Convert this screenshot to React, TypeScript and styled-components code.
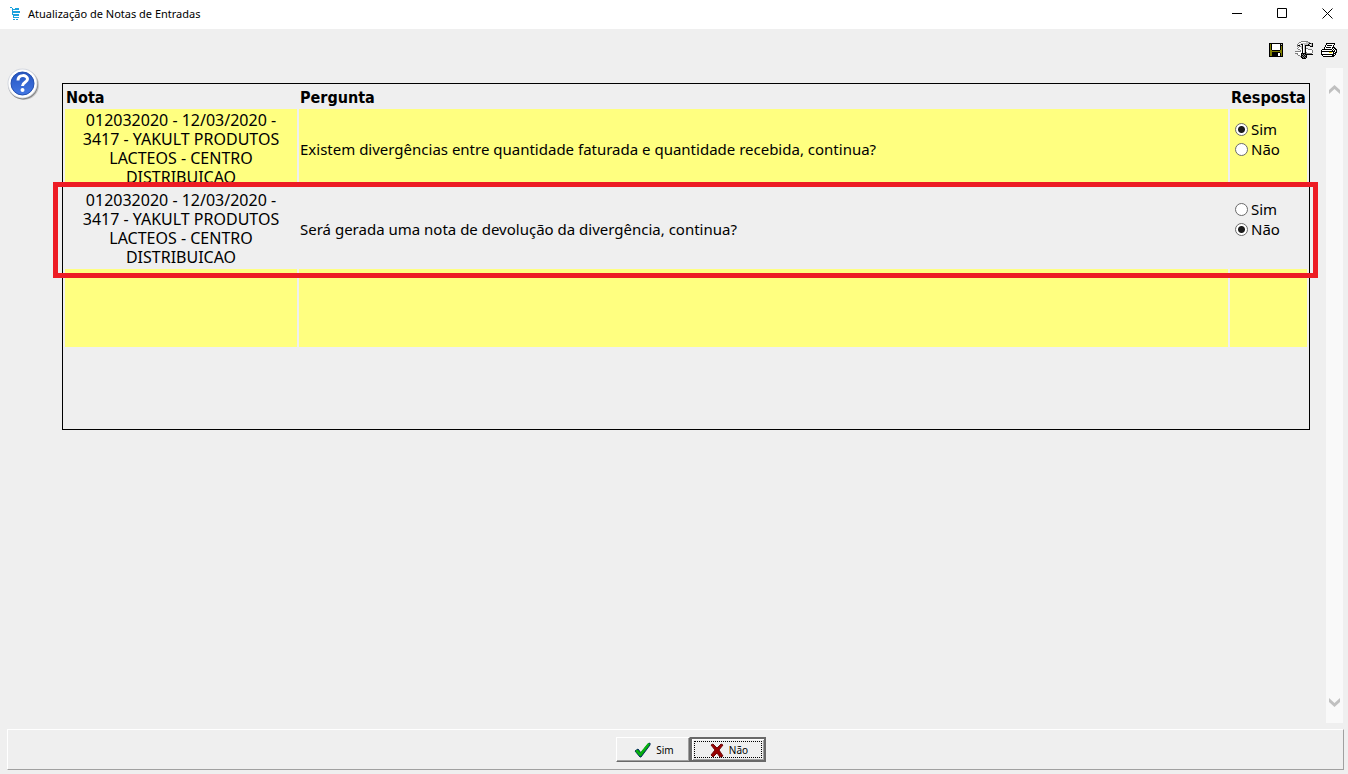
import React from "react";
import styled, { createGlobalStyle } from "styled-components";

const GlobalStyle = createGlobalStyle`
  *, *::before, *::after { box-sizing: border-box; }
  body {
    margin: 0;
    background: #efefef;
    color: #000;
    font-family: Tahoma, "Noto Sans", sans-serif;
    font-size: 15px;
    line-height: 19px;
  }
`;

const Window = styled.div`
  display: flex;
  flex-direction: column;
  min-height: 100vh;
`;

const TitleBar = styled.header`
  display: flex;
  align-items: center;
  gap: 8px;
  height: 29px;
  padding: 0 5px 2px 10px;
  background: #fff;
`;

const Title = styled.h1`
  flex: 1;
  margin: 0;
  font: 400 11px/16px "Segoe UI", "Noto Sans", sans-serif;
`;

const WindowControls = styled.div`
  display: flex;
  gap: 14px;
`;

const IconButton = styled.button<{ $width: number }>`
  display: flex;
  align-items: center;
  justify-content: center;
  width: ${(p) => p.$width}px;
  height: 24px;
  padding: 0;
  border: 0;
  background: transparent;
`;

const Toolbar = styled.nav`
  display: flex;
  justify-content: flex-end;
  align-items: center;
  gap: 8px;
  height: 39px;
  padding: 3px 11px 0 0;
`;

const Body = styled.div`
  display: flex;
  flex: 1;
`;

const HelpColumn = styled.aside`
  width: 62px;
  padding-left: 7px;
`;

const Content = styled.main`
  flex: 1;
  padding: 15px 16px 0 0;
`;

const Frame = styled.section`
  min-height: 347px;
  padding: 0 0 80px;
  border: 1px solid #000;
`;

const Table = styled.table`
  width: 100%;
  border-collapse: separate;
  border-spacing: 2px;
  table-layout: fixed;
`;

const Col = styled.col<{ $width?: number }>`
  width: ${(p) => (p.$width ? `${p.$width}px` : "auto")};
`;

const HeadCell = styled.th`
  height: 21px;
  padding: 2px 1px 0;
  font-family: Tahoma, "DejaVu Sans Condensed", sans-serif;
  font-size: 16px;
  text-align: left;
  white-space: nowrap;
`;

const Row = styled.tr<{ $striped?: boolean; $marked?: boolean }>`
  position: relative;
  z-index: ${(p) => (p.$marked ? 1 : 0)};

  td {
    background: ${(p) => (p.$striped ? "#ffff80" : "transparent")};
  }

  ${(p) =>
    p.$marked &&
    `td:first-child::after {
      content: "";
      position: absolute;
      inset: -7px -11px -11px -12px;
      border: 5px solid #ed1c24;
      pointer-events: none;
    }`}
`;

const Cell = styled.td<{ $align?: string }>`
  height: 78px;
  padding: 2px 1px 0;
  text-align: ${(p) => p.$align ?? "left"};
  vertical-align: middle;
`;

const NoteText = styled.div`
  padding: 0 14px;
  font-size: 16px;
`;

const Choices = styled.fieldset`
  display: flex;
  flex-direction: column;
  height: 76px;
  margin: 0;
  padding: 8px 0 0 4px;
  border: 0;
`;

const Choice = styled.label`
  display: flex;
  align-items: center;
  gap: 3px;
  height: 20px;
`;

const Radio = styled.input`
  appearance: none;
  width: 13px;
  height: 13px;
  margin: 0;
  border: 1px solid #6a6a6a;
  border-radius: 50%;
  background: #fff;

  &:checked {
    background: radial-gradient(circle, #1c1c1c 3px, #fff 4px);
  }
`;

const ScrollTrack = styled.div`
  display: flex;
  flex-direction: column;
  justify-content: space-between;
  width: 17px;
  margin-right: 5px;
  padding: 9px 0;
  background: #f9f9f9;
`;

const Footer = styled.footer`
  display: flex;
  justify-content: center;
  align-items: flex-start;
  height: 41px;
  margin: 6px 4px 4px 7px;
  padding: 7px 0 0 31px;
  border: 1px solid;
  border-color: #fff #a0a0a0 #a0a0a0 #fff;
`;

const ActionButton = styled.button<{ $focused?: boolean }>`
  display: flex;
  align-items: center;
  justify-content: center;
  gap: 5px;
  width: ${(p) => (p.$focused ? 76 : 74)}px;
  height: 25px;
  padding: 1px 0 0 2px;
  border: ${(p) => (p.$focused ? "2px solid #696969" : "1px solid")};
  ${(p) => !p.$focused && "border-color: #fff #696969 #696969 #fff;"}
  box-shadow: ${(p) =>
    p.$focused
      ? "inset 1px 1px #fff, inset -1px -1px #a0a0a0"
      : "inset -1px -1px #a0a0a0"};
  outline: ${(p) => (p.$focused ? "1px dotted #000" : "none")};
  outline-offset: -5px;
  background: #efefef;
  color: #000;
  font: 400 10px/13px Tahoma, "Noto Sans", sans-serif;
`;

/* Small bitmap icons, one character per pixel. */
const palette: Record<string, string> = {
  k: "#000",
  w: "#fff",
  g: "#808080",
  s: "#c0c0c0",
  o: "#808000",
  y: "#e8e000",
  b: "#1ba1dc",
};

const PixelIcon = ({ rows }: { rows: string[] }) => {
  const width = Math.max(...rows.map((r) => r.length));
  return (
    <svg
      width={width}
      height={rows.length}
      viewBox={`0 0 ${width} ${rows.length}`}
      shapeRendering="crispEdges"
      aria-hidden="true"
    >
      {rows.flatMap((row, y) =>
        [...row].map((c, x) =>
          palette[c] ? (
            <rect key={`${x}-${y}`} x={x} y={y} width="1" height="1" fill={palette[c]} />
          ) : null
        )
      )}
    </svg>
  );
};

const floppy = [
  "kkkkkkkkkkkkkk",
  "kokwwwwwwwwksk",
  "kokwwwwwwwwkkk",
  "kokwwwwwwwwkok",
  "kokwwwwwwwwkok",
  "kokwwwwwwwwkok",
  "kokwwwwwwwwkok",
  "kookkkkkkkkook",
  "kooooooooooook",
  "kookkkkkkkkook",
  "kookkkkkkwwkok",
  "kookkkkkkwwkok",
  "kookkkkkkwwkok",
  "kkkkkkkkkkkkkk",
];

const hammer = [
  "......ggggggg.....",
  "....ggwwwwwssgg...",
  "...gwwsssssssskkgk",
  "..gwsskkwsssskswsk",
  "..gkk..kwskkkkkssk",
  "..g.ggskwsk....kkk",
  "...gwwskwsk.......",
  "..gwwwskwskgg.....",
  "...ggwwkwskwwgggg.",
  ".....gwkwskwwwwwwg",
  "ggggggwkwskwwwwwwg",
  ".wwwwwwkwskgwwwwwg",
  "gggwwwkkkkkgggggg.",
  "..gwwwkgkgkkkkkkkk",
  "...ggwkkgkgk......",
  ".....gkgkgkk......",
  "......kkgkgk......",
  ".......kkkk.......",
];

const printer = [
  ".....kkkkkkkkk..",
  ".....kwwwwwwwk..",
  "....kwkkkkkwk...",
  "....kwwwwwwwk...",
  "...kwkkkkkwkkk..",
  "...kwwwwwwwkwkk.",
  ".kkkkkkkkkkwkwkk",
  "kwwwwwwwwwwkwkwk",
  "kkkkkkkkkkkkkkwk",
  "kwwwwwwwyyywkwkk",
  "kwwwwwwwwwwwkkk.",
  "kkkkkkkkkkkkkwk.",
  ".kwwwwwwwwwkkk..",
  "..kkkkkkkkkkk...",
];

const cart = [
  "bb........",
  "..b..bbbb.",
  "..bbbbbbb.",
  "..b.......",
  "..bbbbbbbb",
  "..bbbbbbbb",
  "..b.......",
  "..bbbbbbb.",
  "...bbbbbb.",
  "...b......",
  "...bbbbbb.",
  "..........",
  "...bb.bb..",
];

const CheckIcon = () => (
  <svg width="17" height="16" viewBox="0 0 17 16" aria-hidden="true">
    <path d="M1 9l3-2 3 4 7-9 2-1v2L7 15H6z" fill="#00a808" stroke="#002860" strokeWidth="1" />
    <path d="M2 8.500l4 4 9-11" fill="none" stroke="#08b010" strokeWidth="2" />
  </svg>
);

const CrossIcon = () => (
  <svg width="14" height="15" viewBox="0 0 14 15" aria-hidden="true">
    <path d="M1 2l2-1 4 4 4-4 2 1-4 5 4 6-3 1-3-4-4 4-2-2 4-5z" fill="#980000" stroke="#700808" strokeWidth="1" />
  </svg>
);

const HelpIcon = () => (
  <svg width="33" height="33" viewBox="0 0 33 33" role="img" aria-label="Ajuda">
    <defs>
      <linearGradient id="helpBlue" x1="0" y1="0" x2="0" y2="1">
        <stop offset="0" stopColor="#2454c0" />
        <stop offset="1" stopColor="#4478e4" />
      </linearGradient>
    </defs>
    <circle cx="17" cy="17" r="15" fill="#888" opacity=".4" />
    <circle cx="16" cy="16.5" r="15" fill="#808080" />
    <circle cx="15.5" cy="15.5" r="15" fill="#d4d8e0" />
    <circle cx="15.5" cy="15.5" r="14" fill="#fff" />
    <circle cx="15.5" cy="15.5" r="11.5" fill="url(#helpBlue)" stroke="#2450b0" />
    <path d="M11 12.500c0-6.500 9.500-6 9.500-1.500 0 3.500-5 3-5 7" fill="none" stroke="#fff" strokeWidth="3" />
    <circle cx="15.500" cy="22" r="2" fill="#fff" />
  </svg>
);

const ScrollArrow = ({ down }: { down?: boolean }) => (
  <svg width="11" height="9" viewBox="0 0 11 9" aria-hidden="true">
    <path d={down ? "M0 0l5.500 5L11 0v4L5.500 9 0 4z" : "M0 9l5.500-5L11 9V5L5.500 0 0 5z"} fill="#c0c0c0" />
  </svg>
);

const windowControls = [
  { label: "Minimizar", path: "M0 5.500h10" },
  { label: "Maximizar", path: "M.5.5h9v9H.5z" },
  { label: "Fechar", path: "M.5.5l10 10M10.500.5l-10 10" },
];

const tools = [
  { label: "Salvar", rows: floppy, width: 22 },
  { label: "Configurar", rows: hammer, width: 18 },
  { label: "Imprimir", rows: printer, width: 16 },
];

const NOTE = "012032020 - 12/03/2020 - 3417 - YAKULT PRODUTOS LACTEOS - CENTRO DISTRIBUICAO";

const questions = [
  {
    id: "divergencia",
    note: NOTE,
    text: "Existem divergências entre quantidade faturada e quantidade recebida, continua?",
    answer: "Sim",
  },
  {
    id: "devolucao",
    note: NOTE,
    text: "Será gerada uma nota de devolução da divergência, continua?",
    answer: "Não",
  },
];

export default function App() {
  return (
    <Window>
      <GlobalStyle />
      <TitleBar>
        <PixelIcon rows={cart} />
        <Title>Atualização de Notas de Entradas</Title>
        <WindowControls>
          {windowControls.map((c) => (
            <IconButton key={c.label} $width={31} type="button" aria-label={c.label}>
              <svg width="11" height="11" viewBox="0 0 11 11" aria-hidden="true">
                <path d={c.path} fill="none" stroke="#000" />
              </svg>
            </IconButton>
          ))}
        </WindowControls>
      </TitleBar>
      <Toolbar>
        {tools.map((t) => (
          <IconButton key={t.label} $width={t.width} type="button" aria-label={t.label}>
            <PixelIcon rows={t.rows} />
          </IconButton>
        ))}
      </Toolbar>
      <Body>
        <HelpColumn>
          <HelpIcon />
        </HelpColumn>
        <Content>
          <Frame>
            <Table>
              <colgroup>
                <Col $width={232} />
                <Col />
                <Col $width={77} />
              </colgroup>
              <thead>
                <tr>
                  <HeadCell scope="col">Nota</HeadCell>
                  <HeadCell scope="col">Pergunta</HeadCell>
                  <HeadCell scope="col">Resposta</HeadCell>
                </tr>
              </thead>
              <tbody>
                {questions.map((q, i) => (
                  <Row key={q.id} $striped={i % 2 === 0} $marked={i === 1}>
                    <Cell $align="center">
                      <NoteText>{q.note}</NoteText>
                    </Cell>
                    <Cell>{q.text}</Cell>
                    <Cell>
                      <Choices aria-label={q.text}>
                        {["Sim", "Não"].map((option) => (
                          <Choice key={option}>
                            <Radio type="radio" name={q.id} value={option} defaultChecked={option === q.answer} />
                            {option}
                          </Choice>
                        ))}
                      </Choices>
                    </Cell>
                  </Row>
                ))}
                <Row $striped>
                  <Cell />
                  <Cell />
                  <Cell />
                </Row>
              </tbody>
            </Table>
          </Frame>
        </Content>
        <ScrollTrack>
          <IconButton $width={17} type="button" aria-label="Rolar para cima">
            <ScrollArrow />
          </IconButton>
          <IconButton $width={17} type="button" aria-label="Rolar para baixo">
            <ScrollArrow down />
          </IconButton>
        </ScrollTrack>
      </Body>
      <Footer>
        <ActionButton type="button">
          <CheckIcon />
          Sim
        </ActionButton>
        <ActionButton type="button" $focused>
          <CrossIcon />
          Não
        </ActionButton>
      </Footer>
    </Window>
  );
}
